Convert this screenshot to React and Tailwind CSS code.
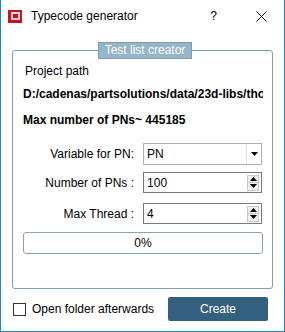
import React from "react";

const font = { fontFamily: '"Liberation Sans", Arial, sans-serif' };

function SpinButtons() {
  return (
    <div className="flex flex-col w-[12px] h-[16px] border border-[#c8c8c8] bg-[#f0f0f0] mr-[2px]">
      <div className="flex-1 flex items-center justify-center border-b border-[#c8c8c8]">
        <svg width="7" height="4" viewBox="0 0 7 4"><path d="M0 4 L3.5 0 L7 4 Z" fill="#000" /></svg>
      </div>
      <div className="flex-1 flex items-center justify-center">
        <svg width="7" height="4" viewBox="0 0 7 4"><path d="M0 0 L3.5 4 L7 0 Z" fill="#000" /></svg>
      </div>
    </div>
  );
}

function Row({ label, children, mt }) {
  return (
    <div className={`flex items-center ${mt}`}>
      <div className="w-[121px] text-right text-[12px] text-black pr-[9px]">{label}</div>
      {children}
    </div>
  );
}

export default function App() {
  return (
    <div className="w-[285px] h-[332px] bg-white flex flex-col border-x border-b border-[#1883d7] text-black" style={font}>
      <div className="h-[32px] flex items-center shrink-0">
        <div className="ml-[7px] w-[14px] h-[13px] bg-[#c4161c] flex items-center justify-center">
          <div className="w-[9px] h-[8px] bg-[#f6d2d2] flex items-center justify-center">
            <div className="w-[5px] h-[4px] bg-[#c4161c]" />
          </div>
        </div>
        <div className="ml-[9px] text-[12px] leading-none">Typecode generator</div>
        <div className="ml-auto text-[12px] mr-[39px]">?</div>
        <svg className="mr-[17px]" width="11" height="11" viewBox="0 0 11 11">
          <path d="M0.5 0.5 L10.5 10.5 M10.5 0.5 L0.5 10.5" stroke="#000" strokeWidth="1" />
        </svg>
      </div>

      <div className="relative mx-[11px] mt-[18px] h-[239px] border border-[#7f9db3] rounded-[3px] px-[10px]">
        <div className="absolute left-[85px] top-[-9px] w-[94px] h-[17px] bg-[#96b4ca] border border-[#7f9db3] text-white text-[12px] leading-[15px] text-center">
          Test list creator
        </div>
        <div className="ml-[2px] mt-[12px] text-[12px] leading-[16px]">Project path</div>
        <div className="mt-[7px] text-[12px] leading-[16px] font-bold whitespace-nowrap overflow-hidden w-[240px]">
          D:/cadenas/partsolutions/data/23d-libs/thomson
        </div>
        <div className="mt-[10px] text-[12px] leading-[16px] font-bold whitespace-nowrap">Max number of PNs~ 445185</div>

        <Row label="Variable for PN:" mt="mt-[15px]">
          <div className="w-[120px] h-[22px] border border-[#adadad] flex items-center">
            <div className="flex-1 pl-[3px] text-[12px]">PN</div>
            <div className="w-[15px] h-full border-l border-[#dcdcdc] flex items-center justify-center">
              <svg width="7" height="4" viewBox="0 0 7 4"><path d="M0 0 L3.5 4 L7 0 Z" fill="#000" /></svg>
            </div>
          </div>
        </Row>
        <Row label="Number of PNs :" mt="mt-[7px]">
          <div className="w-[120px] h-[21px] border border-[#7a7a7a] flex items-center">
            <div className="flex-1 pl-[3px] text-[12px]">100</div>
            <SpinButtons />
          </div>
        </Row>
        <Row label="Max Thread :" mt="mt-[10px]">
          <div className="w-[120px] h-[21px] border border-[#7a7a7a] flex items-center">
            <div className="flex-1 pl-[3px] text-[12px]">4</div>
            <SpinButtons />
          </div>
        </Row>
        <div className="mt-[8px] w-[240px] h-[22px] border border-[#8aa2b6] rounded-[3px] flex items-center justify-center text-[12px]">
          0%
        </div>
      </div>

      <div className="flex items-center mt-[8px] h-[24px]">
        <div className="ml-[12px] w-[13px] h-[13px] border border-[#333]" />
        <div className="ml-[6px] text-[12px]">Open folder afterwards</div>
        <div className="ml-auto mr-[16px] w-[100px] h-[24px] bg-[#34607f] rounded-[2px] text-white text-[12px] flex items-center justify-center">
          Create
        </div>
      </div>
    </div>
  );
}
